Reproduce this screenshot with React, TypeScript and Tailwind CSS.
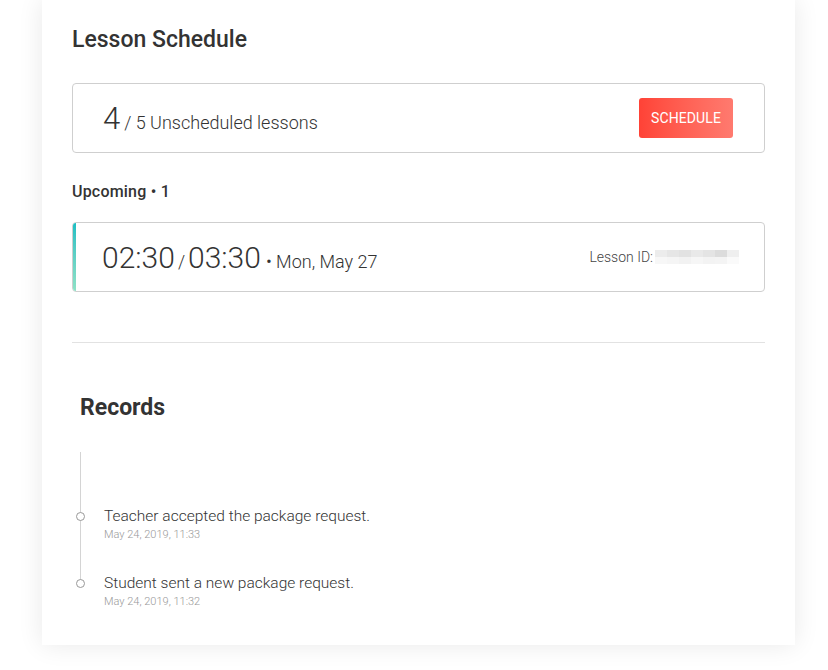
import React from 'react';

const mosaic = [
  ['#ececec', '#e6e6e6', '#e2e2e2', '#e9e9e9', '#e4e4e4', '#dcdcdc', '#efefef'],
  ['#f7f7f7', '#f5f5f5', '#f2f2f2', '#f6f6f6', '#f3f3f3', '#f4f4f4', '#fafafa'],
];

const records = [
  { text: 'Teacher accepted the package request.', date: 'May 24, 2019, 11:33' },
  { text: 'Student sent a new package request.', date: 'May 24, 2019, 11:32' },
];

export default function App() {
  return (
    <div className="w-[828px] h-[670px] bg-white overflow-hidden font-['Roboto',sans-serif] text-[#333]">
      <div className="ml-[42px] w-[753px] h-[645px] bg-white shadow-[0_0_24px_rgba(0,0,0,0.09)] px-[30px] pt-[23px]">
        {/* Lesson Schedule */}
        <h2 className="text-[23px] leading-[33px] font-medium text-[#333]">Lesson Schedule</h2>

        <div className="mt-[27px] h-[70px] border border-[#cfcfcf] rounded-[4px] flex items-center justify-between pl-[30px] pr-[31px]">
          <div className="flex items-baseline font-light text-[#333] pt-[3px]">
            <span className="text-[31px] leading-none">4</span>
            <span className="text-[18px] ml-[4px]">/ 5 Unscheduled lessons</span>
          </div>
          <button className="w-[94px] h-[40px] rounded-[3px] bg-gradient-to-r from-[#ff4236] to-[#ff7a6f] text-white text-[14px] font-normal tracking-[0.1px]">
            SCHEDULE
          </button>
        </div>

        <div className="mt-[28px] text-[16px] leading-[22px] font-medium text-[#333] tracking-[0.2px]">Upcoming • 1</div>

        <div className="mt-[19px] h-[70px] border border-[#cfcfcf] rounded-[4px] flex overflow-hidden">
          <div className="w-[3px] bg-gradient-to-b from-[#16bfc3] to-[#8ee2c6] shrink-0" />
          <div className="flex-1 flex items-center justify-between pl-[26px] pr-[25px]">
            <div className="flex items-baseline font-light text-[#333] pt-[3px]">
              <span className="text-[30px] leading-none">02:30</span>
              <span className="text-[18px] mx-[3px]">/</span>
              <span className="text-[30px] leading-none">03:30</span>
              <span className="text-[18px] ml-[5px]">• Mon, May 27</span>
            </div>
            <div className="flex items-center text-[14px] font-light text-[#444]">
              <span>Lesson ID:</span>
              <div className="ml-[2px] flex flex-col">
                {mosaic.map((row, i) => (
                  <div key={i} className="flex">
                    {row.map((c, j) => (
                      <div key={j} className="w-[12px] h-[7px]" style={{ background: c }} />
                    ))}
                  </div>
                ))}
              </div>
            </div>
          </div>
        </div>

        <div className="mt-[50px] h-px bg-[#e2e2e2]" />

        {/* Records */}
        <h2 className="mt-[49px] pl-[8px] text-[23px] leading-[32px] font-bold text-[#333]">Records</h2>

        <div className="ml-[8px] mt-[28px] border-l border-[#d4d4d4] h-[130px] relative">
          <div className="h-[54px]" />
          {records.map((r, i) => (
            <div key={i} className={`relative pl-[23px] ${i > 0 ? 'mt-[30px]' : ''}`}>
              <span className="absolute left-[-5px] top-[6px] w-[9px] h-[9px] rounded-full border border-[#999] bg-white" />
              <div className="text-[15.5px] leading-[20px] font-light text-[#333]">{r.text}</div>
              <div className="text-[11px] leading-[16px] font-light text-[#999] mt-[1px]">{r.date}</div>
            </div>
          ))}
        </div>
      </div>
    </div>
  );
}
